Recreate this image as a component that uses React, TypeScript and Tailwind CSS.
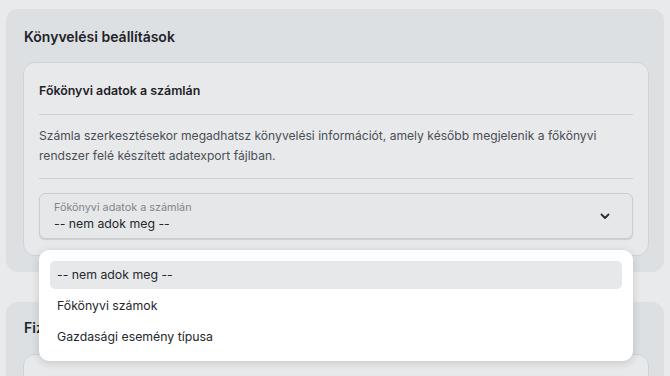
import React from "react";

export default function App() {
  return (
    <div
      className="w-[670px] bg-[#e9eaec] pt-[9px] px-[6px] overflow-hidden h-[376px]"
      style={{ fontFamily: "Inter, 'Noto Sans', sans-serif" }}
    >
      <div className="rounded-[12px] bg-[#dde0e3] pl-[17px] pr-[15px] pt-[18px] pb-[16px]">
        <div className="pl-[1px] text-[14px] leading-[20px] font-semibold text-[#1f2328]">Könyvelési beállítások</div>
        <div className="mt-[15px] rounded-[12px] border border-[#cfd3d7] bg-[#e8e9eb] px-[15px] pt-[20px] pb-[16px]">
          <div className="text-[12.4px] leading-[16px] font-semibold text-[#1f2328]">Főkönyvi adatok a számlán</div>
          <div className="mt-[15px] h-px bg-[#cdd1d5]" />
          <div className="mt-[11px] text-[12.1px] leading-[20px] text-[#4a4f55]">
            Számla szerkesztésekor megadhatsz könyvelési információt, amely később megjelenik a főkönyvi rendszer felé készített adatexport fájlban.
          </div>
          <div className="mt-[12px] h-px bg-[#cdd1d5]" />
          <div className="relative mt-[14px]">
            <div className="flex h-[46px] items-center justify-between rounded-[6px] border border-[#c9cdd1] bg-[#e6e7e9] pl-[14px] pr-[22px] shadow-[0_1px_1px_rgba(0,0,0,0.12)]">
              <div className="flex flex-col pt-[1px]">
                <span className="text-[10.8px] leading-[13px] text-[#80868c]">Főkönyvi adatok a számlán</span>
                <span className="mt-[1px] text-[12.3px] leading-[17px] text-[#24282d]">-- nem adok meg --</span>
              </div>
              <svg width="10" height="7" viewBox="0 0 10 7" fill="none">
                <path d="M1.5 1.5 L5 5 L8.5 1.5" stroke="#2a2e33" strokeWidth="1.8" strokeLinecap="round" strokeLinejoin="round" />
              </svg>
            </div>
            <div className="absolute left-0 right-0 top-[57px] z-10 flex flex-col gap-[3px] rounded-[10px] bg-white px-[11px] pt-[11px] pb-[10px] shadow-[0_2px_8px_rgba(0,0,0,0.15)]">
              <div className="flex h-[28px] items-center rounded-[5px] bg-[#e7e8ea] px-[7px] text-[12.3px] text-[#24282d]">-- nem adok meg --</div>
              <div className="flex h-[28px] items-center px-[7px] text-[12.3px] text-[#24282d]">Főkönyvi számok</div>
              <div className="flex h-[28px] items-center px-[7px] text-[12.3px] text-[#24282d]">Gazdasági esemény típusa</div>
            </div>
          </div>
        </div>
      </div>
      <div className="mt-[30px] rounded-[12px] bg-[#dde0e3] pl-[17px] pr-[15px] pt-[16px] pb-[16px]">
        <div className="pl-[1px] text-[14px] leading-[20px] font-semibold text-[#1f2328]">Fizetési beállítások</div>
        <div className="mt-[16px] h-[60px] rounded-[12px] border border-[#cfd3d7] bg-[#e8e9eb]" />
      </div>
    </div>
  );
}
